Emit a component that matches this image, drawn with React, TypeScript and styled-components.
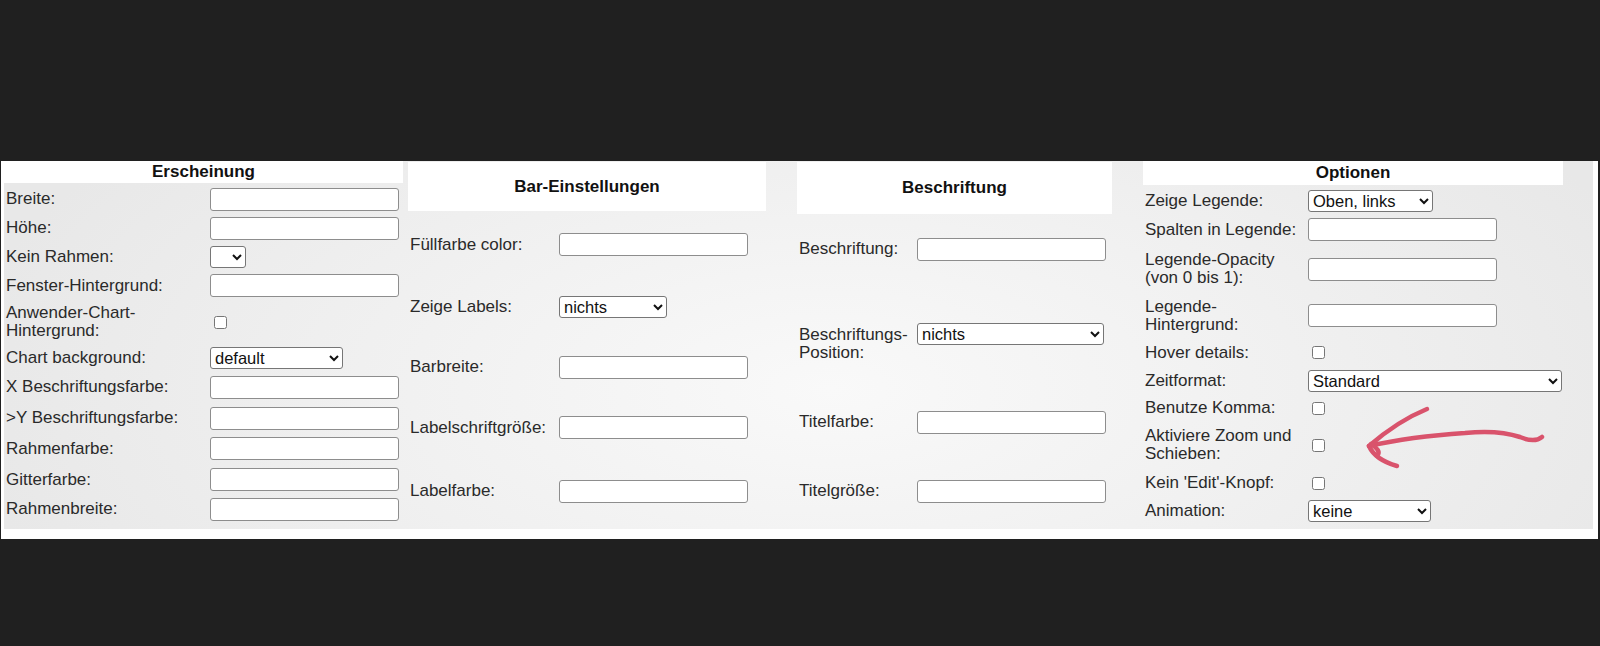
import styled, { createGlobalStyle } from "styled-components";

type Control =
  | { kind: "text" }
  | { kind: "check" }
  | { kind: "select"; width: number; value: string };

interface Field {
  label: string;
  control: Control;
  baseline?: boolean;
}

interface Section {
  title: string;
  width: number;
  gapAfter: number;
  offsetTop: number;
  labelWidth: number;
  rows: number[]; // header + each field row, px
  fields: Field[];
}

const text: Control = { kind: "text" };
const check: Control = { kind: "check" };
const select = (width: number, value: string): Control => ({ kind: "select", width, value });

const sections: Section[] = [
  {
    title: "Erscheinung",
    width: 399,
    gapAfter: 5,
    offsetTop: 0,
    labelWidth: 206,
    rows: [22, 32, 26, 31, 27, 46, 25, 34, 28, 33, 29, 30],
    fields: [
      { label: "Breite:", control: text },
      { label: "Höhe:", control: text },
      { label: "Kein Rahmen:", control: select(36, "") },
      { label: "Fenster-Hintergrund:", control: text },
      { label: "Anwender-Chart-\nHintergrund:", control: check },
      { label: "Chart background:", control: select(133, "default") },
      { label: "X Beschriftungsfarbe:", control: text },
      { label: ">Y Beschriftungsfarbe:", control: text },
      { label: "Rahmenfarbe:", control: text },
      { label: "Gitterfarbe:", control: text },
      { label: "Rahmenbreite:", control: text },
    ],
  },
  {
    title: "Bar-Einstellungen",
    width: 358,
    gapAfter: 31,
    offsetTop: 1,
    labelWidth: 151,
    rows: [49, 67, 58, 62, 59, 68],
    fields: [
      { label: "Füllfarbe color:", control: text },
      { label: "Zeige Labels:", control: select(108, "nichts") },
      { label: "Barbreite:", control: text },
      { label: "Labelschriftgröße:", control: text },
      { label: "Labelfarbe:", control: text },
    ],
  },
  {
    title: "Beschriftung",
    width: 315,
    gapAfter: 31,
    offsetTop: 1,
    labelWidth: 120,
    rows: [52, 70, 116, 44, 94],
    fields: [
      { label: "Beschriftung:", control: text },
      { label: "Beschriftungs-\nPosition:", control: select(187, "nichts"), baseline: true },
      { label: "Titelfarbe:", control: text },
      { label: "Titelgröße:", control: text },
    ],
  },
  {
    title: "Optionen",
    width: 420,
    gapAfter: 0,
    offsetTop: 0,
    labelWidth: 165,
    rows: [24, 32, 25, 54, 39, 35, 22, 32, 42, 34, 22],
    fields: [
      { label: "Zeige Legende:", control: select(125, "Oben, links") },
      { label: "Spalten in Legende:", control: text },
      { label: "Legende-Opacity\n(von 0 bis 1):", control: text },
      { label: "Legende-\nHintergrund:", control: text },
      { label: "Hover details:", control: check },
      { label: "Zeitformat:", control: select(254, "Standard") },
      { label: "Benutze Komma:", control: check },
      { label: "Aktiviere Zoom und\nSchieben:", control: check },
      { label: "Kein 'Edit'-Knopf:", control: check },
      { label: "Animation:", control: select(123, "keine") },
    ],
  },
];

function renderControl(c: Control) {
  if (c.kind === "text") return <TextInput type="text" />;
  if (c.kind === "check") return <Check type="checkbox" />;
  return (
    <Select $w={c.width} defaultValue={c.value}>
      <option value={c.value}>{c.value}</option>
    </Select>
  );
}

export default function App() {
  return (
    <>
      <GlobalStyle />
      <Page>
        <Panel>
          <Settings>
            {sections.map(s => (
              <Column
                key={s.title}
                $w={s.width}
                $gap={s.gapAfter}
                $top={s.offsetTop}
                $rows={s.rows.map(r => `${r}px`).join(" ")}
              >
                <Header>{s.title}</Header>
                {s.fields.map(f => (
                  <Row key={f.label} $labelW={s.labelWidth} $baseline={!!f.baseline}>
                    <Label>{f.label}</Label>
                    {renderControl(f.control)}
                  </Row>
                ))}
              </Column>
            ))}

            {/* hand-drawn annotation pointing at the zoom checkbox */}
            <Scribble viewBox="0 0 200 75" width="200" height="75" aria-hidden="true">
              <path d="M187 37 C181 42 172 40 165 37 C150 32 130 31 110 33 C80 35 45 39 14 46" />
              <path d="M14 46 C30 32 50 18 72 9" />
              <path d="M14 46 C18 55 28 62 42 66" />
              <path d="M16 44 C22 48 26 52 22 56" />
            </Scribble>
          </Settings>
        </Panel>
      </Page>
    </>
  );
}

// ---------- styled components ----------
const GlobalStyle = createGlobalStyle`
  html, body {
    margin: 0;
    padding: 0;
    background: #202020;
  }
  body {
    font-family: "Liberation Sans", Arial, sans-serif;
  }
`;

const Page = styled.div`
  width: 1600px;
  height: 646px;
  padding: 161px 0 0 1px;
  box-sizing: border-box;
  background: #202020;
  overflow: hidden;
`;

const Panel = styled.div`
  width: 1597px;
  height: 378px;
  box-sizing: border-box;
  padding: 0 5px 10px 3px;
  background: #fff;
`;

const Settings = styled.div`
  position: relative;
  display: flex;
  align-items: flex-start;
  height: 100%;
  background: radial-gradient(ellipse 55% 110% at 52% 62%, #f9f9f9 0%, #efefef 60%, #e8e8e8 100%);
  overflow: hidden;
`;

const Column = styled.div<{ $w: number; $gap: number; $top: number; $rows: string }>`
  flex: 0 0 auto;
  display: grid;
  grid-template-rows: ${({ $rows }) => $rows};
  width: ${({ $w }) => $w}px;
  margin-right: ${({ $gap }) => $gap}px;
  padding-top: ${({ $top }) => $top}px;
`;

const Header = styled.div`
  display: flex;
  align-items: center;
  justify-content: center;
  background: #fff;
  color: #111;
  font-size: 17px;
  font-weight: 700;
`;

const Row = styled.div<{ $labelW: number; $baseline: boolean }>`
  display: grid;
  grid-template-columns: ${({ $labelW }) => $labelW}px auto;
  align-content: center;
  align-items: ${({ $baseline }) => ($baseline ? "baseline" : "center")};
  justify-items: start;
`;

const Label = styled.span`
  padding-left: 2px;
  color: #2a2a2a;
  font-size: 17px;
  line-height: 18px;
  white-space: pre-line;
`;

const TextInput = styled.input`
  box-sizing: border-box;
  width: 189px;
  height: 23px;
  margin: 0;
  padding: 1px 3px;
  border: 1px solid #8d8d8d;
  border-radius: 3px;
  background: #fff;
  font-family: "Liberation Sans", Arial, sans-serif;
  font-size: 16px;
`;

const Select = styled.select<{ $w: number }>`
  box-sizing: border-box;
  width: ${({ $w }) => $w}px;
  height: 22px;
  margin: 0;
  border: 1px solid #767676;
  border-radius: 3px;
  background: #fff;
  color: #111;
  font-family: "Liberation Sans", Arial, sans-serif;
  font-size: 16.5px;
`;

const Check = styled.input`
  width: 13px;
  height: 13px;
  margin: 3px 3px 3px 4px;
`;

const Scribble = styled.svg`
  position: absolute;
  left: 1351px;
  top: 239px;
  overflow: visible;
  fill: none;
  stroke: #d9536c;
  stroke-width: 4.5;
  stroke-linecap: round;
  stroke-linejoin: round;
`;
